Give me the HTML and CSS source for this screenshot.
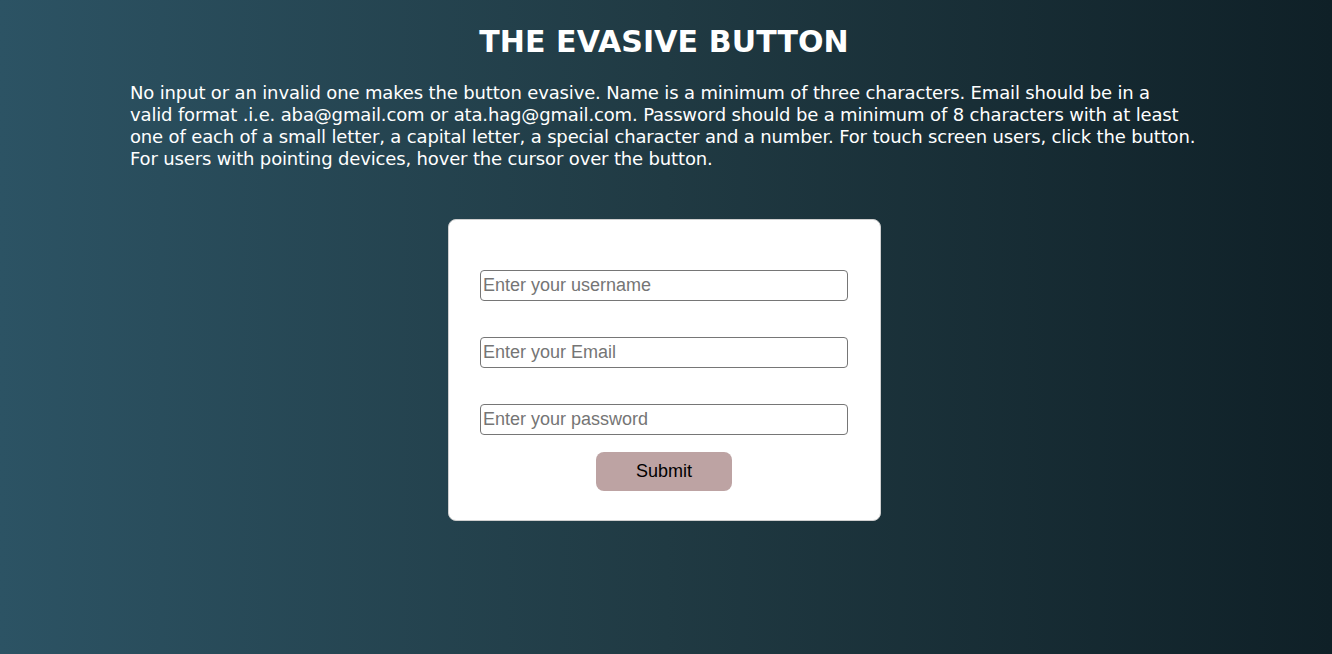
FILE: index.html
```html
<!DOCTYPE html>
<html lang="en">
<head>
<meta charset="utf-8">
<title>The Evasive Button</title>
<link rel="stylesheet" href="styles.css">
</head>
<body>
<main class="page">
  <header class="intro">
    <h1 class="title">THE EVASIVE BUTTON</h1>
    <p class="desc">No input or an invalid one makes the button evasive. Name is a minimum of three characters. Email should be in a<br>valid format .i.e. aba@gmail.com or ata.hag@gmail.com. Password should be a minimum of 8 characters with at least<br>one of each of a small letter, a capital letter, a special character and a number. For touch screen users, click the button.<br>For users with pointing devices, hover the cursor over the button.</p>
  </header>
  <form class="card">
    <input class="field" type="text" placeholder="Enter your username">
    <input class="field" type="email" placeholder="Enter your Email">
    <input class="field" type="password" placeholder="Enter your password">
    <button class="submit" type="button">Submit</button>
  </form>
</main>
</body>
</html>
```
FILE: styles.css
```css
html, body {
  margin: 0;
  padding: 0;
}
body {
  min-height: 100vh;
  background: linear-gradient(to right, #2c5364, #203a43, #0f2027);
  font-family: "DejaVu Sans", "Open Sans", sans-serif;
  color: #ffffff;
}
.page {
  display: flex;
  flex-direction: column;
  align-items: center;
  padding: 24px 4px 0 0;
}
.intro {
  width: 1068px;
  display: flex;
  flex-direction: column;
}
.title {
  margin: 0;
  text-align: center;
  font-size: 30px;
  line-height: 36px;
  font-weight: bold;
  letter-spacing: 0.1px;
}
.desc {
  margin: 22px 0 0 0;
  font-size: 18px;
  line-height: 22px;
  letter-spacing: -0.15px;
  white-space: nowrap;
}
.card {
  box-sizing: border-box;
  width: 433px;
  margin-top: 49px;
  background: #ffffff;
  border: 1px solid #cfcfcf;
  border-radius: 8px;
  padding: 50px 32px 29px;
  display: flex;
  flex-direction: column;
  align-items: center;
}
.field {
  box-sizing: border-box;
  width: 368px;
  height: 31px;
  margin: 0 0 36px 0;
  padding: 0 2px;
  border: 1px solid #767676;
  border-radius: 4px;
  font-family: "Liberation Sans", Arial, sans-serif;
  font-size: 18px;
  color: #000;
  background: #fff;
}
.field:last-of-type {
  margin-bottom: 17px;
}
.field::placeholder {
  color: #757575;
}
.submit {
  box-sizing: border-box;
  width: 136px;
  height: 39px;
  border: none;
  border-radius: 8px;
  background: #bda3a3;
  font-family: "Liberation Sans", Arial, sans-serif;
  font-size: 18px;
  color: #000;
}
```
